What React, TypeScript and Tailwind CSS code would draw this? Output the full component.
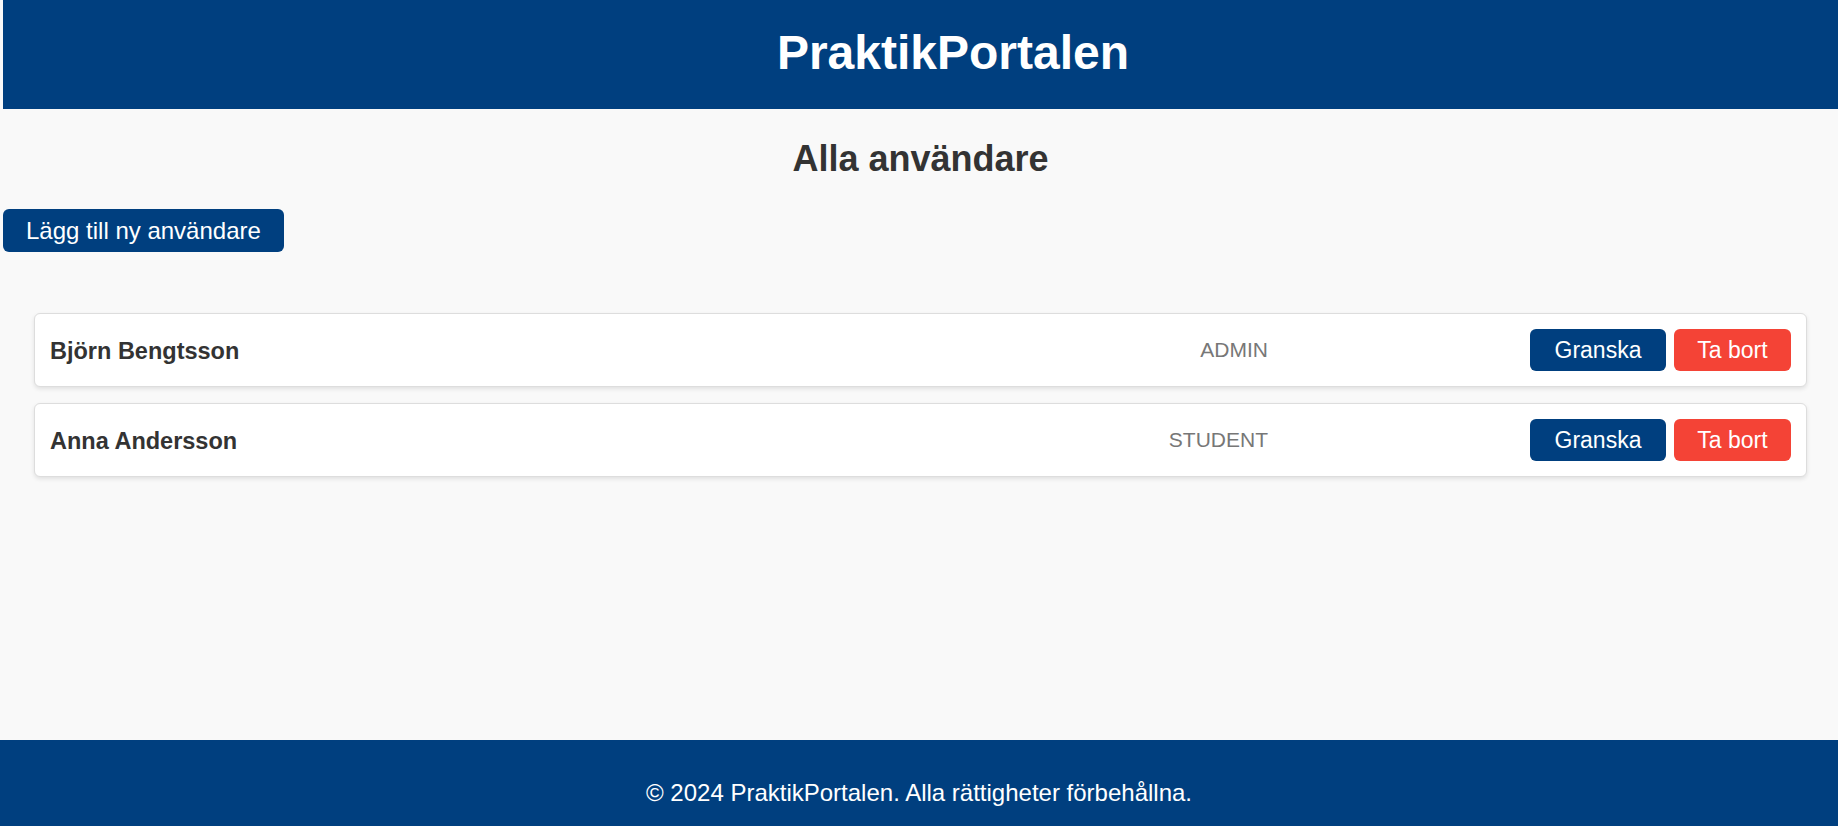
export default function App() {
  const users = [
    { name: "Björn Bengtsson", role: "ADMIN" },
    { name: "Anna Andersson", role: "STUDENT" },
  ];
  return (
    <div className="min-h-screen bg-[#f9f9f9] font-['Liberation_Sans',Arial,sans-serif] flex flex-col">
      <header className="ml-[3px] h-[109px] bg-[#003f7f] flex items-center justify-center pl-[65px] pb-[4px]">
        <h1 className="text-[48px] font-bold text-white leading-[55px]">PraktikPortalen</h1>
      </header>
      <main className="pl-[3px] h-[631px] flex flex-col">
        <h2 className="mt-[29px] text-center text-[36px] font-bold leading-[41px] text-[#333333]">
          Alla användare
        </h2>
        <div className="mt-[30px] flex">
          <button className="h-[43px] px-[23px] rounded-[6px] bg-[#003f7f] text-white text-[24px] leading-[27px] flex items-center">
            Lägg till ny användare
          </button>
        </div>
        <div className="mt-[61px] mx-[31px] flex flex-col gap-[16px]">
          {users.map((u) => (
            <div
              key={u.name}
              className="h-[74px] bg-white border border-[#dddddd] rounded-[6px] shadow-[0_2px_4px_rgba(0,0,0,0.1)] flex items-center pl-[15px] pr-[15px]"
            >
              <div className="flex-1 pt-[3px] text-[23.5px] font-bold text-[#333333]">{u.name}</div>
              <div className="text-[21px] text-[#777777] mr-[262px] pb-[1px]">{u.role}</div>
              <button className="w-[136px] h-[42px] rounded-[6px] bg-[#003f7f] text-white text-[23px] flex items-center justify-center">
                Granska
              </button>
              <button className="w-[117px] h-[42px] ml-[8px] rounded-[6px] bg-[#f44336] text-white text-[23px] flex items-center justify-center">
                Ta bort
              </button>
            </div>
          ))}
        </div>
      </main>
      <footer className="h-[86px] bg-[#003f7f] text-center text-white text-[24px] leading-[27px] pt-[39px]">
        © 2024 PraktikPortalen. Alla rättigheter förbehållna.
      </footer>
    </div>
  );
}
